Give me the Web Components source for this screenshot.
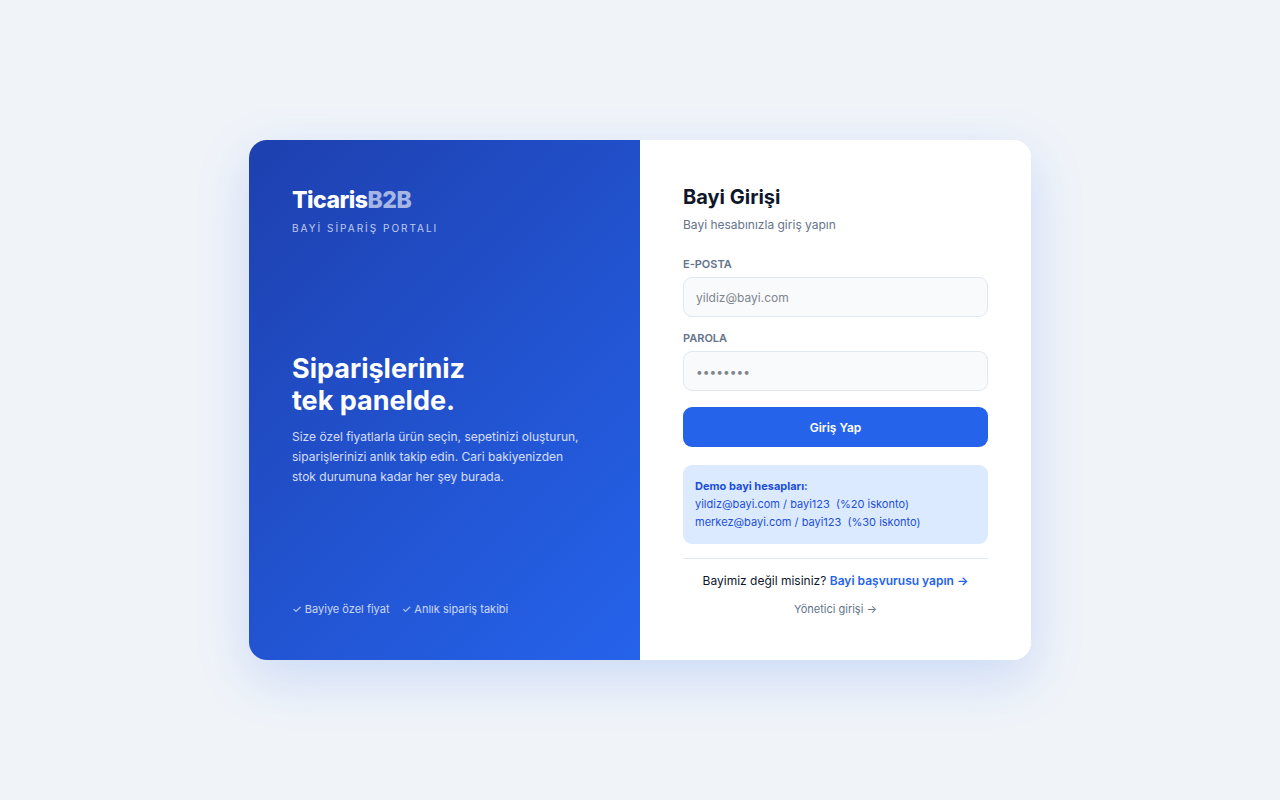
<!DOCTYPE html>
<html lang="tr">
<head>
<meta charset="utf-8">
<meta name="viewport" content="width=device-width, initial-scale=1">
<title>TicarisB2B – Bayi Girişi</title>
<style>
body { margin: 0; font-family: Inter, "Liberation Sans", sans-serif; color: #0f172a; background: #f0f4f9; }
</style>
</head>
<body>
<login-page>
  <brand-panel slot="aside"></brand-panel>
  <login-form slot="main"></login-form>
</login-page>
<script>
const define = (name, html) => {
  const template = document.createElement("template");
  template.innerHTML = html;
  customElements.define(name, class extends HTMLElement {
    constructor() {
      super();
      this.attachShadow({ mode: "open" }).append(template.content.cloneNode(true));
    }
  });
};

define("login-page", `
<style>
:host { display: flex; align-items: center; justify-content: center; min-height: 100vh; box-sizing: border-box; padding: 16px; }
main { display: grid; grid-template-columns: 1fr 1fr; width: 100%; max-width: 782px; border-radius: 18px; overflow: hidden; background: #fff; box-shadow: 0 18px 54px rgba(37, 99, 235, .18); }
@media (max-width: 640px) { main { grid-template-columns: 1fr; } }
</style>
<main><slot name="aside"></slot><slot name="main"></slot></main>`);

define("check-item", `
<style>:host { display: block; }</style>
<span>✓ <slot></slot></span>`);

define("brand-panel", `
<style>
:host { display: flex; flex-direction: column; justify-content: space-between; gap: 32px; padding: 43px; color: #fff; background: linear-gradient(135deg, #1e40af, #2563eb); }
header { padding-bottom: 4px; }
.name { font-size: 23px; line-height: 34px; font-weight: 800; letter-spacing: -0.5px; }
.name span { opacity: .6; }
.tag { margin-top: 4px; font-size: 10px; line-height: 14px; letter-spacing: 2px; opacity: .7; }
h2 { margin: 0 0 10px; font-size: 27px; line-height: 32px; font-weight: 700; }
p { margin: 0; max-width: 292px; font-size: 12px; line-height: 20px; opacity: .8; }
.perks { display: flex; gap: 12px; font-size: 11px; line-height: 16px; opacity: .75; }
</style>
<header><div class="name">Ticaris<span>B2B</span></div><div class="tag">BAYİ SİPARİŞ PORTALI</div></header>
<section><h2>Siparişleriniz<br>tek panelde.</h2>
<p>Size özel fiyatlarla ürün seçin, sepetinizi oluşturun, siparişlerinizi anlık takip edin. Cari bakiyenizden stok durumuna kadar her şey burada.</p></section>
<div class="perks"><check-item>Bayiye özel fiyat</check-item><check-item>Anlık sipariş takibi</check-item></div>`);

customElements.define("form-field", class extends HTMLElement {
  constructor() {
    super();
    this.attachShadow({ mode: "open" }).innerHTML = `
<style>
:host { display: block; }
label { display: block; margin-bottom: 6px; font-size: 11px; line-height: 14px; font-weight: 600; color: #64748b; }
input { display: block; width: 100%; height: 40px; box-sizing: border-box; padding: 0 12px; border: 1px solid #e2e8f0; border-radius: 9px; background: #f8fafc; color: #0f172a; font: 12px Inter, "Liberation Sans", sans-serif; }
input::placeholder { color: #80858c; }
input:focus { outline: 0; border-color: #2563eb; }
</style>
<label for="control"></label><input id="control">`;
  }
  connectedCallback() {
    this.shadowRoot.querySelector("label").textContent = this.getAttribute("label");
    const input = this.shadowRoot.querySelector("input");
    input.type = this.getAttribute("type");
    input.placeholder = this.getAttribute("placeholder");
  }
});

define("demo-accounts", `
<style>
:host { display: block; padding: 12px 12px 13px; border-radius: 9px; background: #dbeafe; color: #1d4ed8; font-size: 11px; line-height: 18px; }
strong { display: block; font-weight: 700; }
</style>
<strong>Demo bayi hesapları:</strong><slot></slot>`);

define("login-form", `
<style>
:host { display: block; padding: 43px; background: #fff; }
h1 { margin: 0 0 6px; font-size: 20px; line-height: 28px; font-weight: 700; }
.sub { margin: 0 0 24px; font-size: 12px; line-height: 16px; color: #64748b; }
form-field + form-field { margin-top: 14px; }
button { display: block; width: 100%; height: 40px; margin: 16px 0 18px; padding: 0; border: 0; border-radius: 9px; background: #2563eb; color: #fff; font: 600 12px Inter, "Liberation Sans", sans-serif; cursor: pointer; }
footer { display: flex; flex-direction: column; gap: 12px; margin-top: 14px; padding-top: 14px; border-top: 1px solid #e2e8f0; text-align: center; font-size: 12px; line-height: 16px; }
a { color: #2563eb; font-weight: 600; text-decoration: none; }
.admin { font-size: 11px; font-weight: 400; color: #64748b; }
</style>
<h1>Bayi Girişi</h1>
<p class="sub">Bayi hesabınızla giriş yapın</p>
<form>
<form-field label="E-POSTA" type="email" placeholder="yildiz@bayi.com"></form-field>
<form-field label="PAROLA" type="password" placeholder="••••••••"></form-field>
<button type="button">Giriş Yap</button>
</form>
<demo-accounts><div>yildiz@bayi.com / bayi123 &nbsp;(%20 iskonto)</div><div>merkez@bayi.com / bayi123 &nbsp;(%30 iskonto)</div></demo-accounts>
<footer><div>Bayimiz değil misiniz? <a href="#basvuru">Bayi başvurusu yapın →</a></div><a class="admin" href="#yonetici">Yönetici girişi →</a></footer>`);
</script>
</body>
</html>
